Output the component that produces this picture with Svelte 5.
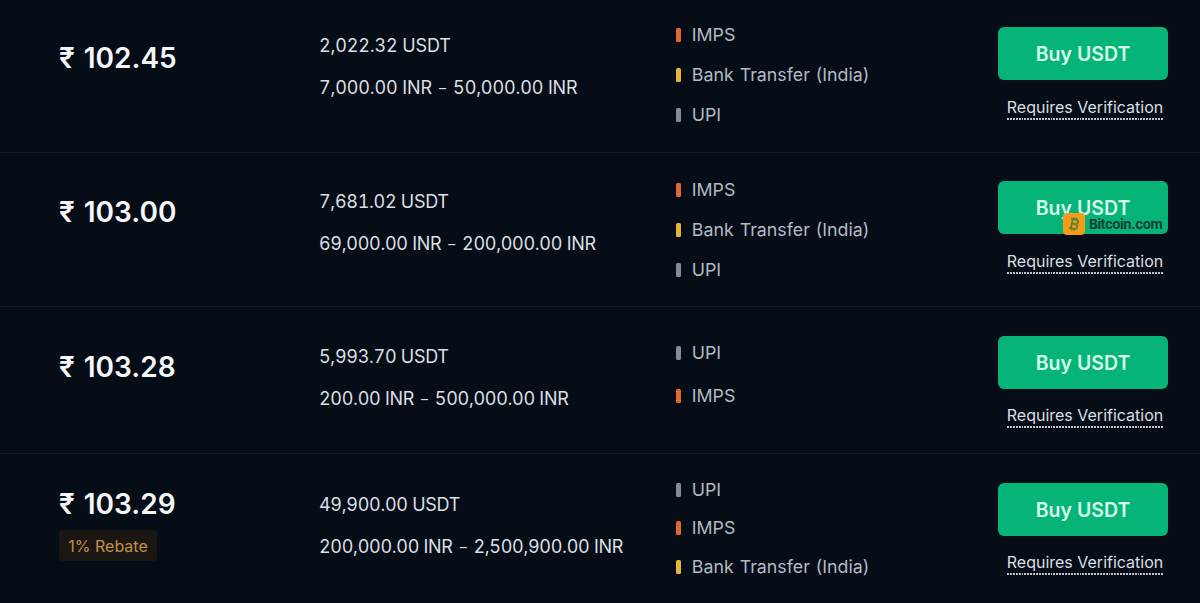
<script>
  const methods = {
    imps: { name: 'IMPS', color: 'orange' },
    bank: { name: 'Bank Transfer (India)', color: 'yellow' },
    upi: { name: 'UPI', color: 'gray' },
  };

  const offers = [
    {
      id: 'first',
      price: '102.45',
      amount: '2,022.32',
      min: '7,000.00',
      max: '50,000.00',
      payments: ['imps', 'bank', 'upi'],
    },
    {
      id: 'second',
      price: '103.00',
      amount: '7,681.02',
      min: '69,000.00',
      max: '200,000.00',
      payments: ['imps', 'bank', 'upi'],
      watermark: true,
    },
    {
      id: 'third',
      price: '103.28',
      amount: '5,993.70',
      min: '200.00',
      max: '500,000.00',
      payments: ['upi', 'imps'],
    },
    {
      id: 'fourth',
      price: '103.29',
      amount: '49,900.00',
      min: '200,000.00',
      max: '2,500,900.00',
      payments: ['upi', 'imps', 'bank'],
      rebate: '1% Rebate',
    },
  ];
</script>

<main class="offers">
  {#each offers as offer (offer.id)}
    <section class="offer {offer.id}">
      <div class="price-cell">
        <div class="price">₹ {offer.price}</div>
        {#if offer.rebate}
          <span class="rebate">{offer.rebate}</span>
        {/if}
      </div>

      <div class="amounts">
        <div>{offer.amount} USDT</div>
        <div>{offer.min} INR <span class="dash">–</span> {offer.max} INR</div>
      </div>

      <ul class="payments">
        {#each offer.payments as key}
          <li>
            <span class="marker {methods[key].color}"></span>
            {methods[key].name}
          </li>
        {/each}
      </ul>

      <div class="action">
        <button class="buy">Buy USDT</button>
        <span class="requires">Requires Verification</span>
        {#if offer.watermark}
          <div class="watermark">
            <svg viewBox="0 0 22 22" aria-hidden="true">
              <rect width="22" height="22" rx="4" fill="#f59a1b" />
              <g
                transform="rotate(12 11 11)"
                fill="none"
                stroke="#53872f"
                stroke-width="1.8"
                stroke-linejoin="round"
              >
                <path d="M8.8 6.2v9.6M7 6.2h5.2a2.3 2.3 0 0 1 0 4.6H8.8M12.2 10.8a2.5 2.5 0 0 1 0 5H7" />
                <path d="M9.9 4.2v2M12.3 4.2v2M9.9 15.8v2M12.3 15.8v2" stroke-width="1.3" />
              </g>
            </svg>
            <span>Bitcoin.com</span>
          </div>
        {/if}
      </div>
    </section>
  {/each}
</main>

<style>
  :global(body) {
    margin: 0;
    background: #060d16;
  }

  .offers {
    width: 1200px;
    height: 603px;
    overflow: hidden;
    background: #060d16;
    font-family: Inter, 'Liberation Sans', sans-serif;
    color: #dcdfe3;
  }

  .offer {
    display: grid;
    grid-template-columns: 260px 357px 322px 170px;
    align-items: start;
    box-sizing: border-box;
    height: 153px;
    padding-left: 59px;
    border-bottom: 1px solid #151d26;
    --price-top: 38px;
    --amounts-top: 24.5px;
    --amounts-tracking: -0.3px;
    --payments-top: 14px;
    --payment-height: 40px;
    --action-top: 27px;
    --requires-gap: 17px;
  }

  .first {
    --amounts-tracking: -0.14px;
  }

  .second {
    height: 154px;
    --price-top: 39px;
    --amounts-top: 28px;
    --payments-top: 16.5px;
    --action-top: 28px;
  }

  .third {
    height: 147px;
    --price-top: 40px;
    --amounts-top: 29px;
    --payments-top: 24.5px;
    --payment-height: 42.5px;
    --action-top: 29px;
    --requires-gap: 16px;
  }

  .fourth {
    height: 149px;
    border-bottom: 0;
    --price-top: 30px;
    --amounts-top: 29.5px;
    --payments-top: 16px;
    --payment-height: 38.5px;
    --action-top: 29px;
    --requires-gap: 16px;
  }

  .price-cell {
    padding-top: var(--price-top);
  }

  .price {
    font-size: 28px;
    line-height: 40px;
    font-weight: 600;
    word-spacing: 2px;
    color: #f5f6f7;
    white-space: nowrap;
  }

  .rebate {
    display: block;
    box-sizing: border-box;
    width: 98px;
    height: 31px;
    margin-top: 6px;
    border-radius: 4px;
    background: #1a1713;
    color: #c28f4a;
    font-size: 16px;
    line-height: 32px;
    text-align: center;
  }

  .amounts {
    padding-top: var(--amounts-top);
    font-size: 18px;
    line-height: 42px;
    font-variant-numeric: tabular-nums;
    letter-spacing: var(--amounts-tracking);
    white-space: nowrap;
  }

  .dash {
    display: inline-block;
    margin: 0 2.5px;
    font-size: 14px;
    line-height: 1;
    vertical-align: 1px;
  }

  .payments {
    margin: 0;
    padding: var(--payments-top) 0 0;
    list-style: none;
    font-size: 17.8px;
    word-spacing: 1px;
    color: #b5bac5;
  }

  .payments li {
    display: flex;
    align-items: center;
    gap: 10.4px;
    height: var(--payment-height);
    white-space: nowrap;
  }

  .marker {
    width: 5px;
    height: 14px;
    margin: 1px 0 0 0.4px;
    border-radius: 1.5px;
  }

  .orange {
    background: #e0672f;
  }

  .yellow {
    background: #e5b43a;
  }

  .gray {
    background: #858b94;
  }

  .action {
    position: relative;
    display: flex;
    flex-direction: column;
    align-items: center;
    padding-top: var(--action-top);
  }

  .buy {
    width: 170px;
    height: 53px;
    padding: 1px 0 0;
    border: 0;
    border-radius: 6px;
    background: #06b478;
    color: #d5fbea;
    font: 600 19.5px/52px Inter, 'Liberation Sans', sans-serif;
  }

  .requires {
    margin: var(--requires-gap) 0 0 4px;
    padding-bottom: 2px;
    background: repeating-linear-gradient(90deg, #c2c5c9 0 1.9px, transparent 1.9px 2.9px) left bottom / 100% 2px no-repeat;
    font-size: 16px;
    line-height: 21px;
    white-space: nowrap;
  }

  .watermark {
    position: absolute;
    left: 65px;
    top: 60px;
    display: flex;
    align-items: center;
    gap: 4px;
    color: #0c4036;
    font-size: 13.5px;
    line-height: 22px;
    font-weight: 700;
    letter-spacing: -0.5px;
  }

  .watermark svg {
    width: 22px;
    height: 22px;
  }
</style>
